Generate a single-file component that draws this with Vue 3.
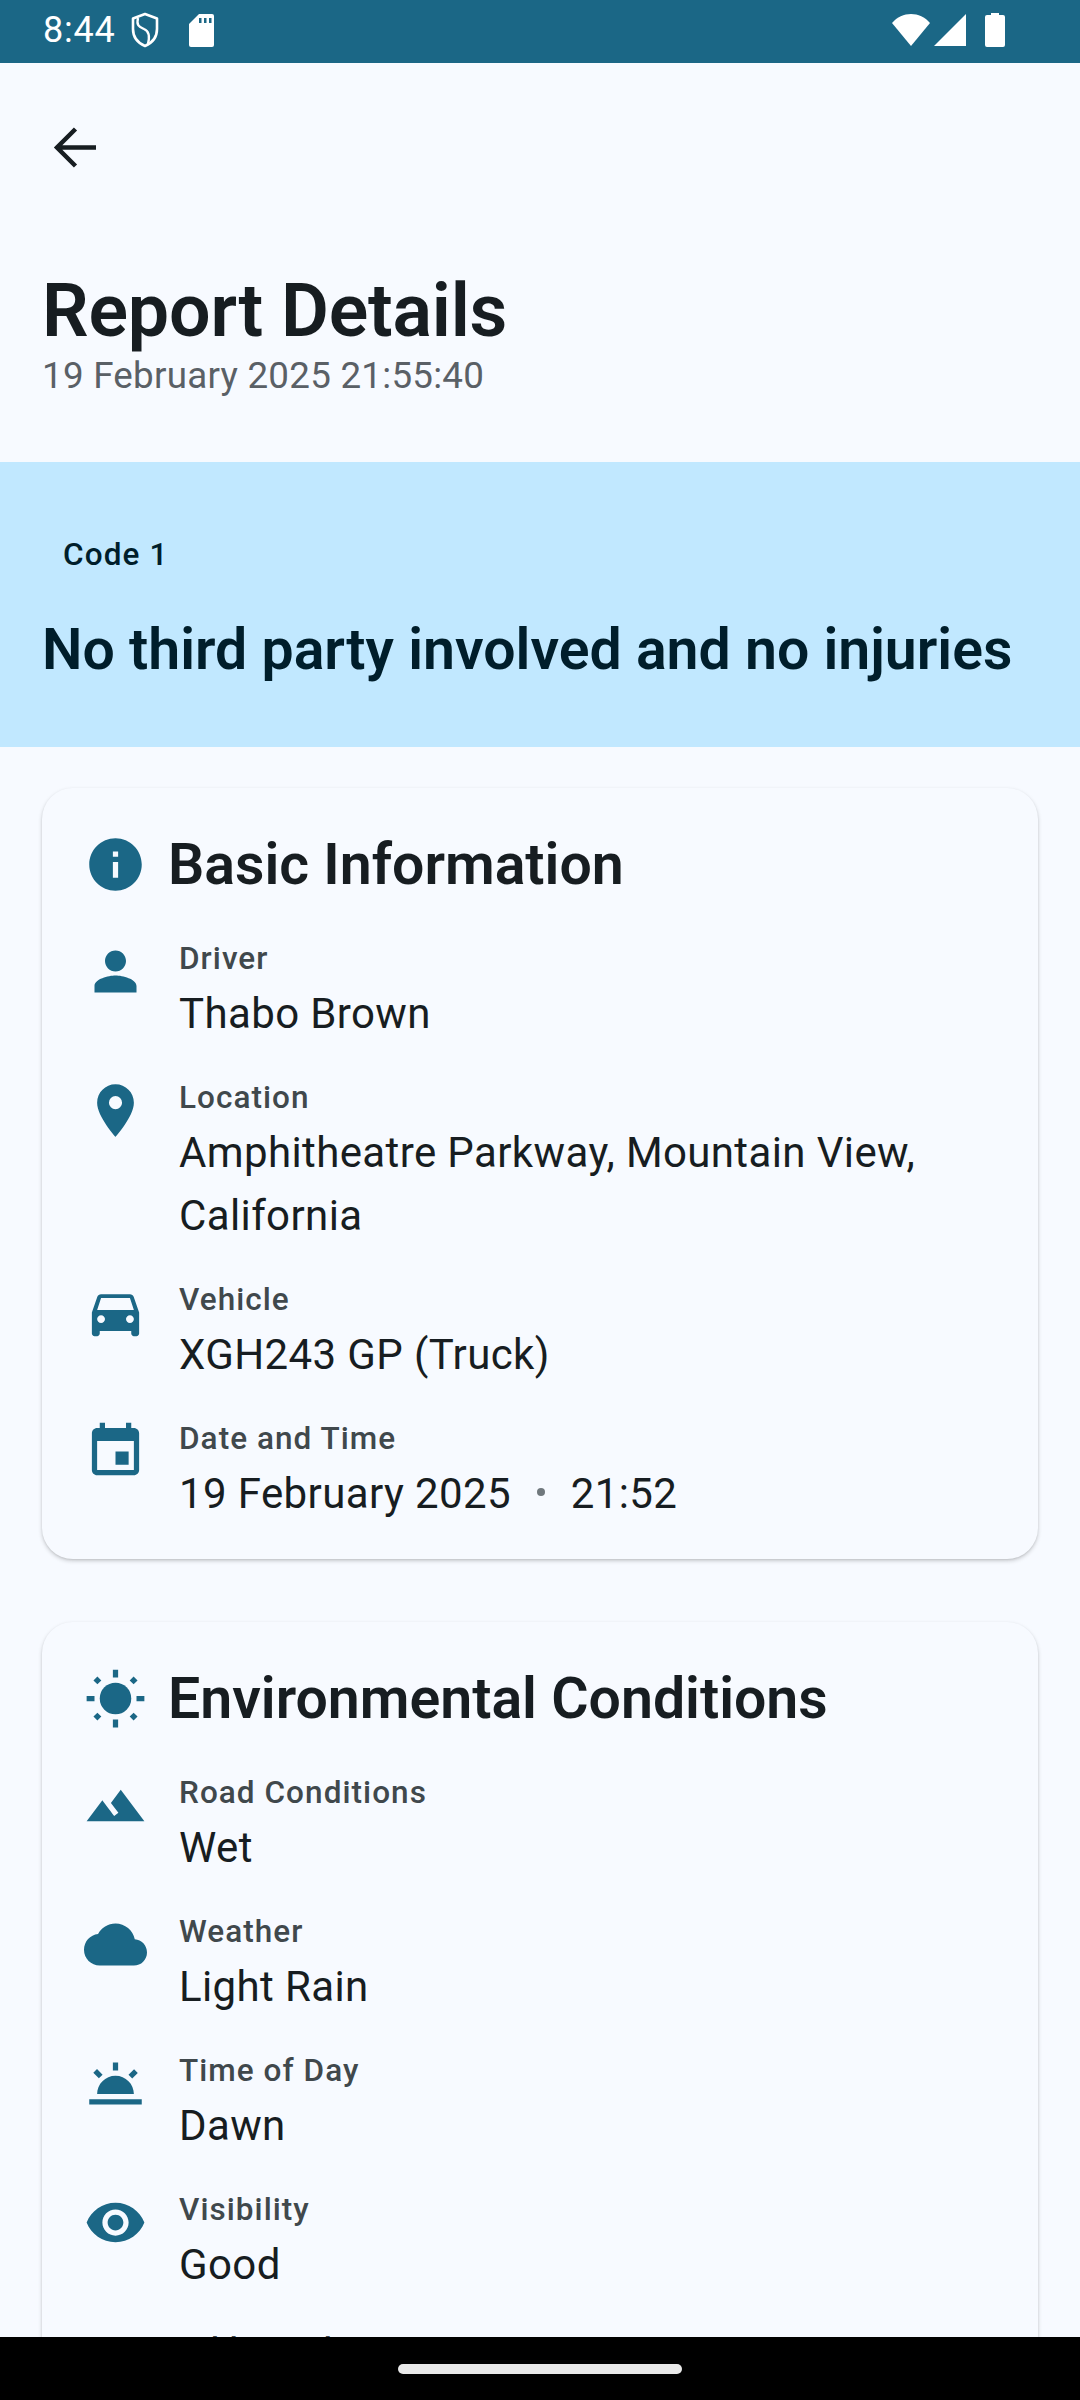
<template>
  <div class="screen">
    <div class="status-bar">
      <div class="status-left">
        <span class="clock">8:44</span>
        <svg class="shield" viewBox="0 0 30 36">
          <path d="M15 2 L27 6.500 V17 C27 25 22 31 15 34 C8 31 3 25 3 17 V6.500 Z" fill="none" stroke="#fff" stroke-width="2.600" stroke-linejoin="round" />
          <path d="M8 6 C6 14 10 15 14 17 C19 19 20 24 18 32" fill="none" stroke="#fff" stroke-width="2.400" />
        </svg>
        <svg class="sdcard" viewBox="0 0 25 33">
          <path d="M10 0 H23 A2 2 0 0 1 25 2 V31 A2 2 0 0 1 23 33 H2 A2 2 0 0 1 0 31 V10 Z" fill="#fff" />
          <path d="M10 4 h2.500 v5 h-2.500 z M15 4 h2.500 v5 h-2.500 z M20 4 h2.500 v5 h-2.500 z" fill="#1b6786" />
        </svg>
      </div>
      <div class="status-right">
        <svg class="wifi" viewBox="0 0 38 32">
          <path d="M0 9 C10 -3 28 -3 38 9 L19 32 Z" fill="#fff" />
        </svg>
        <svg class="signal" viewBox="0 0 32 32">
          <path d="M0 32 L32 0 V32 Z" fill="#fff" />
        </svg>
        <svg class="battery" viewBox="0 0 20 34">
          <path d="M6 0 H14 V2 H18 A2 2 0 0 1 20 4 V32 A2 2 0 0 1 18 34 H2 A2 2 0 0 1 0 32 V4 A2 2 0 0 1 2 2 H6 Z" fill="#fff" />
        </svg>
      </div>
    </div>

    <div class="top-bar">
      <svg class="back" viewBox="0 0 43 41">
        <path d="M43 20.500 H4 M22.500 2 L4 20.500 L22.500 39" fill="none" stroke="#171d21" stroke-width="4.500" />
      </svg>
    </div>

    <div class="header">
      <h1>Report Details</h1>
      <p>19 February 2025 21:55:40</p>
    </div>

    <div class="code-band">
      <span class="code-tag">Code 1</span>
      <h2>No third party involved and no injuries</h2>
    </div>

    <div class="cards">
      <section v-for="card in cards" :key="card.title" class="card">
        <div class="card-title">
          <svg class="title-icon" viewBox="0 0 24 24" v-html="icons[card.icon]"></svg>
          <h3>{{ card.title }}</h3>
        </div>
        <div class="rows">
          <div v-for="row in card.rows" :key="row.label" class="row">
            <svg class="row-icon" viewBox="0 0 24 24" v-html="icons[row.icon]"></svg>
            <div class="row-text">
              <div class="row-label">{{ row.label }}</div>
              <div class="row-value">
                {{ row.value }}
                <template v-if="row.time">
                  <span class="dot"></span>{{ row.time }}
                </template>
              </div>
            </div>
          </div>
        </div>
      </section>
    </div>

    <div class="nav-bar">
      <div class="pill"></div>
    </div>
  </div>
</template>

<script setup>
// Material icons, 24 unit grid
const icons = {
  info: '<path d="M12 2C6.480 2 2 6.480 2 12s4.480 10 10 10 10-4.480 10-10S17.520 2 12 2zm1 15h-2v-6h2v6zm0-8h-2V7h2v2z"/>',
  person: '<path d="M12 12c2.210 0 4-1.790 4-4s-1.790-4-4-4-4 1.790-4 4 1.790 4 4 4zm0 1.500c-2.670 0-8 1.340-8 4V20h16v-2.500c0-2.660-5.330-4-8-4z"/>',
  place: '<path d="M12 2C8.130 2 5 5.130 5 9c0 5.250 7 13 7 13s7-7.750 7-13c0-3.870-3.130-7-7-7zm0 9.500a2.500 2.500 0 0 1 0-5 2.500 2.500 0 0 1 0 5z"/>',
  car: '<path d="M18.920 6.010C18.720 5.420 18.160 5 17.500 5h-11c-.66 0-1.210.42-1.420 1.010L3 12v8c0 .55.45 1 1 1h1c.55 0 1-.45 1-1v-1h12v1c0 .55.45 1 1 1h1c.55 0 1-.45 1-1v-8l-2.080-5.990zM6.500 16c-.83 0-1.500-.67-1.500-1.500S5.670 13 6.500 13s1.500.67 1.500 1.500S7.330 16 6.500 16zm11 0c-.83 0-1.500-.67-1.500-1.500s.67-1.500 1.500-1.500 1.500.67 1.500 1.500-.67 1.500-1.500 1.500zM5 11l1.500-4.500h11L19 11H5z"/>',
  event: '<path d="M17 12h-5v5h5v-5zM16 1v2H8V1H6v2H5c-1.110 0-1.990.9-1.990 2L3 19c0 1.100.89 2 2 2h14c1.100 0 2-.9 2-2V5c0-1.100-.9-2-2-2h-1V1h-2zm3 18H5V8h14v11z"/>',
  sun: '<circle cx="12" cy="12" r="6"/><path d="M11 1h2v3h-2zM11 20h2v3h-2zM1 11h3v2H1zM20 11h3v2h-3zM5.100 3.600l1.500 1.500-1.500 1.500-1.500-1.500zM18.900 3.600l1.500 1.500-1.500 1.500-1.500-1.500zM5.100 17.400l1.500 1.500-1.500 1.500-1.500-1.500zM18.900 17.400l1.500 1.500-1.500 1.500-1.500-1.500z"/>',
  terrain: '<path d="M14 6l-3.750 5 2.850 3.800-1.600 1.200C9.810 13.750 7 10 7 10l-6 8h22L14 6z"/>',
  cloud: '<path d="M19.350 10.040C18.670 6.590 15.640 4 12 4 9.110 4 6.600 5.640 5.350 8.040 2.340 8.360 0 10.910 0 14c0 3.310 2.690 6 6 6h13c2.760 0 5-2.240 5-5 0-2.640-2.050-4.780-4.650-4.960z"/>',
  twilight: '<path d="M16.955 8.662l2.120-2.122 1.416 1.414-2.121 2.122zM2 18h20v2H2zm9-14h2v3h-2zM3.543 7.925L4.960 6.510l2.120 2.120-1.414 1.415zM5 16h14c0-3.870-3.130-7-7-7s-7 3.130-7 7z"/>',
  eye: '<path d="M12 4.500C7 4.500 2.730 7.610 1 12c1.730 4.390 6 7.500 11 7.500s9.270-3.110 11-7.500c-1.730-4.390-6-7.500-11-7.500zM12 17c-2.760 0-5-2.240-5-5s2.240-5 5-5 5 2.240 5 5-2.240 5-5 5zm0-8c-1.660 0-3 1.340-3 3s1.340 3 3 3 3-1.340 3-3-1.340-3-3-3z"/>'
}

const cards = [
  {
    title: 'Basic Information',
    icon: 'info',
    rows: [
      { icon: 'person', label: 'Driver', value: 'Thabo Brown' },
      { icon: 'place', label: 'Location', value: 'Amphitheatre Parkway, Mountain View, California' },
      { icon: 'car', label: 'Vehicle', value: 'XGH243 GP (Truck)' },
      { icon: 'event', label: 'Date and Time', value: '19 February 2025', time: '21:52' }
    ]
  },
  {
    title: 'Environmental Conditions',
    icon: 'sun',
    rows: [
      { icon: 'terrain', label: 'Road Conditions', value: 'Wet' },
      { icon: 'cloud', label: 'Weather', value: 'Light Rain' },
      { icon: 'twilight', label: 'Time of Day', value: 'Dawn' },
      { icon: 'eye', label: 'Visibility', value: 'Good' },
      // cut off by the nav bar, only the tops of the letters show
      { label: 'Additional', value: '' }
    ]
  }
]
</script>

<style scoped>
.screen {
  position: relative;
  width: 1080px;
  height: 2400px;
  overflow: hidden;
  background: #f7faff;
  color: #171d21;
  font-family: Roboto, "Noto Sans", sans-serif;
}

.status-bar {
  height: 63px;
  background: #1b6786;
  display: flex;
  justify-content: space-between;
  align-items: center;
  padding: 0 75px 3px 43px;
  box-sizing: border-box;
  color: #fff;
}

.status-left,
.status-right {
  display: flex;
  align-items: center;
}

.clock {
  font-size: 36px;
  letter-spacing: 0.8px;
}

.shield {
  width: 30px;
  height: 36px;
  margin-left: 14px;
}

.sdcard {
  width: 25px;
  height: 33px;
  margin-left: 29px;
}

.wifi {
  width: 38px;
  height: 32px;
}

.signal {
  width: 32px;
  height: 32px;
  margin-left: 4px;
}

.battery {
  width: 20px;
  height: 34px;
  margin-left: 19px;
}

.top-bar {
  height: 147px;
  padding-left: 53px;
  padding-top: 64px;
  box-sizing: border-box;
}

.back {
  width: 43px;
  height: 41px;
  display: block;
}

.header {
  padding: 58px 42px 0;
  height: 252px;
  box-sizing: border-box;
}

.header h1 {
  margin: 0;
  font-size: 73.5px;
  font-weight: 600;
  line-height: 86px;
  letter-spacing: -0.2px;
}

.header p {
  margin: 1px 0 0;
  font-size: 36.75px;
  line-height: 42px;
  color: #5a6066;
  letter-spacing: 0.25px;
}

.code-band {
  height: 285px;
  background: #c1e8ff;
  padding: 75px 42px 0;
  box-sizing: border-box;
  color: #001e2b;
}

.code-tag {
  display: block;
  padding-left: 21px;
  font-size: 31.5px;
  font-weight: 500;
  line-height: 36px;
  letter-spacing: 1.1px;
}

.code-band h2 {
  margin: 40px 0 0;
  font-size: 57.2px;
  font-weight: 600;
  line-height: 74px;
}

.cards {
  padding: 41px 42px 0;
  display: flex;
  flex-direction: column;
  gap: 63px;
}

.card {
  background: #f7faff;
  border-radius: 31px;
  padding: 45px 42px 34px;
  box-shadow: 0 2px 4px rgba(0, 0, 0, 0.18), 0 1px 2px rgba(0, 0, 0, 0.08);
}

.card-title {
  display: flex;
  align-items: center;
  gap: 21px;
  margin-bottom: 42px;
}

.title-icon {
  width: 63px;
  height: 63px;
  fill: #1b6786;
  flex: none;
}

.card-title h3 {
  margin: 0;
  font-size: 57.2px;
  font-weight: 600;
  line-height: 63px;
}

.rows {
  display: flex;
  flex-direction: column;
  gap: 32px;
}

.row {
  display: flex;
  gap: 32px;
}

.row-icon {
  width: 63px;
  height: 63px;
  fill: #1b6786;
  flex: none;
  margin-top: 2px;
}

.row-text {
  flex: 1;
  min-width: 0;
}

.row-label {
  font-size: 31.5px;
  font-weight: 500;
  line-height: 42px;
  letter-spacing: 1.05px;
  color: #40484c;
  margin-bottom: 2px;
}

.row-value {
  font-size: 42px;
  line-height: 63px;
  letter-spacing: 0.38px;
}

.dot {
  display: inline-block;
  width: 8px;
  height: 8px;
  border-radius: 50%;
  background: #70787d;
  margin: 0 26px 0 15px;
  vertical-align: 12px;
}

.nav-bar {
  position: absolute;
  left: 0;
  right: 0;
  bottom: 0;
  height: 63px;
  background: #000;
}

.pill {
  position: absolute;
  left: 398px;
  top: 27px;
  width: 284px;
  height: 10px;
  border-radius: 5px;
  background: #e9e9e9;
}
</style>
